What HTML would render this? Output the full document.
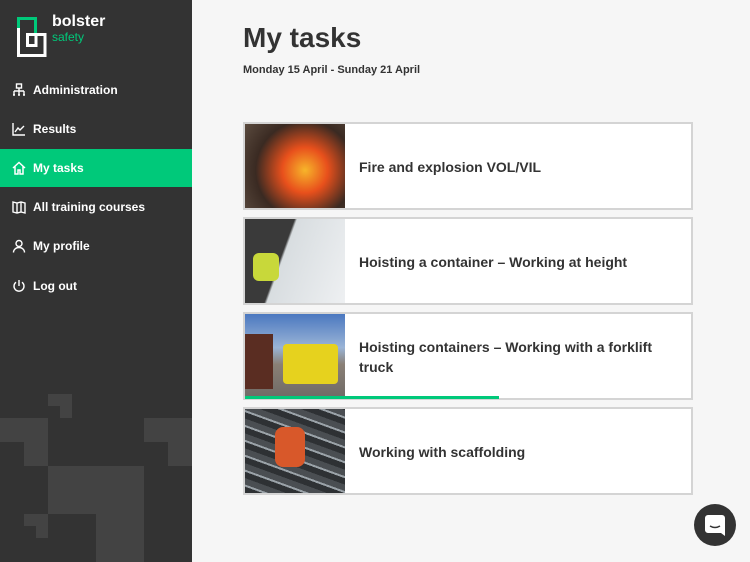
<!DOCTYPE html>
<html><head><meta charset="utf-8"><style>
*{margin:0;padding:0;box-sizing:border-box}
body{width:750px;height:562px;overflow:hidden;background:#f6f6f6;font-family:"Liberation Sans",sans-serif;position:relative}
.side{position:absolute;left:0;top:0;width:192px;height:562px;background:#333;overflow:hidden}
.p{position:absolute;background:#434343}
.nav{position:absolute;left:0;width:192px;height:38px;color:#fff;font-size:12px;font-weight:bold;display:flex;align-items:center}
.nav svg{position:absolute;left:12px;top:12px}
.nav span{position:absolute;left:33px}
.act{background:#00c97a}
h1{position:absolute;left:243px;top:22px;font-size:28px;font-weight:bold;color:#333}
.date{position:absolute;left:243px;top:64px;font-size:11px;font-weight:bold;color:#333}
.card{position:absolute;left:243px;width:450px;height:88px;background:#fff;border:2px solid #d4d4d4}
.img{position:absolute;left:0;top:0;width:100px;height:84px}
.t{position:absolute;left:114px;font-size:14px;font-weight:bold;color:#333;line-height:20px}
.chat{position:absolute;left:694px;top:504px;width:42px;height:42px;border-radius:50%;background:#333}
</style></head><body>
<div class="side">
<svg style="position:absolute;left:16px;top:16px" width="32" height="42" viewBox="0 0 32 42"><path d="M2.5 12V2.5h17v16" fill="none" stroke="#00c97a" stroke-width="3"/><path d="M2.5 12v27.5h26.5v-21H11.5v11h8.5v-11" fill="none" stroke="#fff" stroke-width="3"/></svg>
<div style="position:absolute;left:52px;top:13px;color:#fff;font-weight:bold;font-size:16px">bolster</div>
<div style="position:absolute;left:52px;top:30px;color:#00c97a;font-size:12px">safety</div>
<div class="nav" style="top:71px"><svg width="14" height="14" viewBox="0 0 14 14" fill="none" stroke="#fff" stroke-width="1.4"><rect x="4.5" y="1" width="5" height="4"/><path d="M7 5v3M2 8h10M2 8v4M7 8v4M12 8v4M1 12h2M6 12h2M11 12h2"/></svg><span>Administration</span></div>
<div class="nav" style="top:110px"><svg width="14" height="14" viewBox="0 0 14 14" fill="none" stroke="#fff" stroke-width="1.4"><path d="M1 1v12h12M3 10l3-4 2 2 4-4"/></svg><span>Results</span></div>
<div class="nav act" style="top:149px"><svg width="14" height="14" viewBox="0 0 14 14" fill="none" stroke="#fff" stroke-width="1.5"><path d="M1 7L7 1.5 13 7M3 5.5V13h3V9h2v4h3V5.5"/></svg><span>My tasks</span></div>
<div class="nav" style="top:188px"><svg width="14" height="14" viewBox="0 0 14 14" fill="none" stroke="#fff" stroke-width="1.4"><path d="M1 2l4 1 4-1 4 1v10l-4-1-4 1-4-1zM5 3v10M9 2v10"/></svg><span>All training courses</span></div>
<div class="nav" style="top:227px"><svg width="14" height="14" viewBox="0 0 14 14" fill="none" stroke="#fff" stroke-width="1.4"><circle cx="7" cy="4.5" r="3"/><path d="M1.5 13.5c0-3 2.5-5 5.5-5s5.5 2 5.5 5"/></svg><span>My profile</span></div>
<div class="nav" style="top:267px"><svg width="14" height="14" viewBox="0 0 14 14" fill="none" stroke="#fff" stroke-width="1.4"><path d="M7 1v6M4 3.2A5 5 0 1 0 10 3.2"/></svg><span>Log out</span></div>
<div class="p" style="left:48px;top:394px;width:24px;height:12px"></div>
<div class="p" style="left:60px;top:406px;width:12px;height:12px"></div>
<div class="p" style="left:0;top:418px;width:48px;height:24px"></div>
<div class="p" style="left:24px;top:442px;width:24px;height:24px"></div>
<div class="p" style="left:144px;top:418px;width:48px;height:24px"></div>
<div class="p" style="left:168px;top:442px;width:24px;height:24px"></div>
<div class="p" style="left:48px;top:466px;width:96px;height:48px"></div>
<div class="p" style="left:96px;top:514px;width:48px;height:48px"></div>
<div class="p" style="left:24px;top:514px;width:24px;height:12px"></div>
<div class="p" style="left:36px;top:526px;width:12px;height:12px"></div>
</div>
<h1>My tasks</h1>
<div class="date">Monday 15 April - Sunday 21 April</div>
<div class="card" style="top:122px"><div class="img" style="background:radial-gradient(circle at 60% 55%,#f7b52a 0,#e8501c 30%,#3a2a22 65%,#5a4a3e 100%)"></div><div class="t" style="top:33px">Fire and explosion VOL/VIL</div></div>
<div class="card" style="top:217px"><div class="img" style="background:linear-gradient(110deg,#3a3a3a 0,#3a3a3a 38%,#d8dde0 40%,#eef0f2 100%)"><div style="position:absolute;left:8px;top:34px;width:26px;height:28px;background:#c8d83a;border-radius:6px"></div></div><div class="t" style="top:33px">Hoisting a container – Working at height</div></div>
<div class="card" style="top:312px"><div class="img" style="background:linear-gradient(180deg,#4b78c0 0,#9ab4d6 40%,#8a8076 60%,#6f6a66 100%)"><div style="position:absolute;left:38px;top:30px;width:55px;height:40px;background:#e6d21e;border-radius:4px"></div><div style="position:absolute;left:0;top:20px;width:28px;height:55px;background:#5a2d22"></div></div><div class="t" style="top:23px">Hoisting containers – Working with a forklift<br>truck</div><div style="position:absolute;left:0;top:82px;width:254px;height:3px;background:#00c97a"></div></div>
<div class="card" style="top:407px"><div class="img" style="background:repeating-linear-gradient(20deg,#2e3134 0 6px,#9aa2a8 6px 8px,#4a4e52 8px 14px)"><div style="position:absolute;left:30px;top:18px;width:30px;height:40px;background:#d8582a;border-radius:8px"></div></div><div class="t" style="top:33px">Working with scaffolding</div></div>
<div class="chat"><svg style="position:absolute;left:11px;top:11px" width="20" height="21" viewBox="0 0 20 21"><path d="M3 0h14a3 3 0 0 1 3 3v18l-4-3H3a3 3 0 0 1-3-3V3a3 3 0 0 1 3-3z" fill="#fff"/><path d="M5 11q5 3 10 0" fill="none" stroke="#333" stroke-width="1.5"/></svg></div>
</body></html>
